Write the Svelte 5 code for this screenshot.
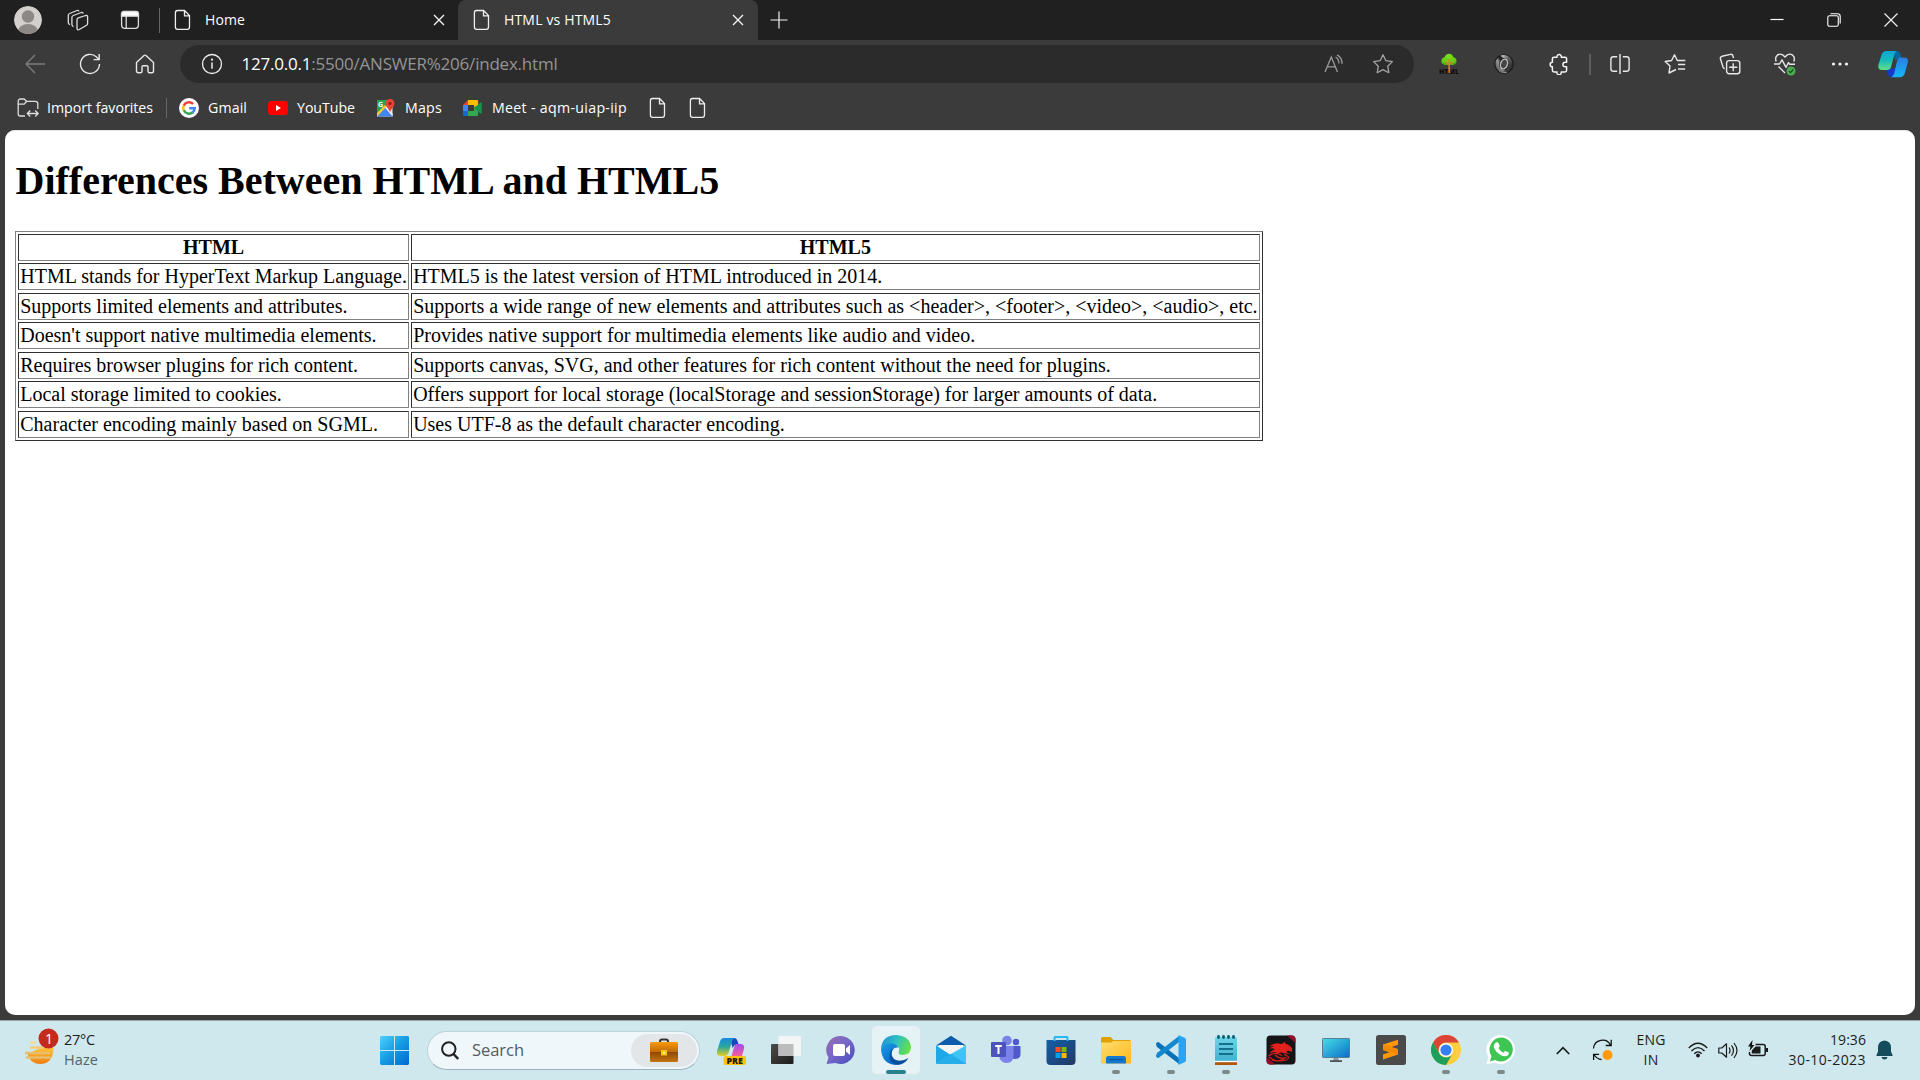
<script>
  const rows = [
    ['HTML stands for HyperText Markup Language.', 'HTML5 is the latest version of HTML introduced in 2014.'],
    ['Supports limited elements and attributes.', 'Supports a wide range of new elements and attributes such as <header>, <footer>, <video>, <audio>, etc.'],
    ["Doesn't support native multimedia elements.", 'Provides native support for multimedia elements like audio and video.'],
    ['Requires browser plugins for rich content.', 'Supports canvas, SVG, and other features for rich content without the need for plugins.'],
    ['Local storage limited to cookies.', 'Offers support for local storage (localStorage and sessionStorage) for larger amounts of data.'],
    ['Character encoding mainly based on SGML.', 'Uses UTF-8 as the default character encoding.'],
  ];
  const apps = ['copilot', 'taskview', 'chat', 'edge', 'mail', 'teams', 'store', 'folder', 'code', 'notepad', 'dragon', 'monitor', 'sublime', 'chrome', 'whatsapp'];
  const running = ['folder', 'code', 'notepad', 'chrome', 'whatsapp'];

  // Tracks a label out or in so that it fills the given width.
  function fit(node, width) {
    const natural = node.getBoundingClientRect().width;
    node.style.letterSpacing = `${(width - natural) / node.textContent.length}px`;
  }
</script>

{#snippet file()}
  <svg class="file" width="18" height="22" viewBox="0 0 18 22" fill="none" stroke="#eee" stroke-width="1.3"><path d="M3.5 1.5h7l5 5v11.5a2.3 2.3 0 0 1-2.3 2.3H3.7a2.3 2.3 0 0 1-2.3-2.3V3.8a2.3 2.3 0 0 1 2.1-2.3zM10.5 1.8v5h5" /></svg>
{/snippet}

{#snippet cross()}
  <svg width="12" height="12" viewBox="0 0 12 12" stroke="#f2f2f2" stroke-width="1.4"><path d="M1 1l10 10M11 1L1 11" /></svg>
{/snippet}

<div class="screen">
  <div class="tabs">
    <div class="c55">
      <svg width="28" height="28" viewBox="0 0 28 28"><clipPath id="av"><circle cx="14" cy="14" r="14" /></clipPath><g clip-path="url(#av)"><circle cx="14" cy="14" r="14" fill="#d2cfcc" /><circle cx="14" cy="10.5" r="6.2" fill="#8c8885" /><ellipse cx="14" cy="25.5" rx="10" ry="7.5" fill="#8c8885" /></g></svg>
    </div>
    <div class="c46">
      <svg width="22" height="22" viewBox="0 0 22 22" fill="none" stroke="#ddd" stroke-width="1.3" stroke-linejoin="round"><path d="M11.300 8.800l7.300-2.300q2-.5 2 1.500v6.500q0 1.200-1 1.800l-7.300 4.200q-2.200 1-2.300-1.200v-8.500q0-1.500 1.300-2z" /><path d="M6.500 17.500q-1.500-.3-1.600-2V8.500q0-1.500 1.400-2l8-3q1.600-.4 2 1M3 15.500q-1.700-.3-1.700-2V6.500q0-1.500 1.400-2l7.300-3q1.600-.5 2 .9" /></svg>
    </div>
    <div class="c58">
      <svg width="20" height="20" viewBox="0 0 20 20" fill="none" stroke="#ddd" stroke-width="1.3"><rect x="1.6" y="1.800" width="16.800" height="16.500" rx="3" /><path d="M1.500 6.200V4q0-2.500 2.500-2.500h12q2.500 0 2.500 2.500v2.200z" fill="#fff" /><path d="M6.200 6v12" /></svg>
    </div>
    <div class="tab first">
      {@render file()}
      <span class="tl" use:fit={40}>Home</span>
      {@render cross()}
    </div>
    <div class="tab active">
      {@render file()}
      <span class="tl" use:fit={107}>HTML vs HTML5</span>
      {@render cross()}
    </div>
    <div class="c42">
      <svg width="18" height="18" viewBox="0 0 18 18" stroke="#f2f2f2" stroke-width="1.200"><path d="M9 .5v17M.5 9h17" /></svg>
    </div>
    <div class="wins">
      <svg width="14" height="14" viewBox="0 0 14 14" stroke="#fff" stroke-width="1.200"><path d="M.5 6.500h13" /></svg>
      <svg width="14" height="14" viewBox="0 0 14 14" fill="none" stroke="#fff" stroke-width="1.100"><rect x=".8" y="2.800" width="10.500" height="10.500" rx="1.800" /><path d="M3.500.8h7a2.700 2.700 0 0 1 2.700 2.700v7" /></svg>
      <svg width="14" height="14" viewBox="0 0 14 14" stroke="#eee" stroke-width="1.200"><path d="M.5.5l13 13M13.500.5l-13 13" /></svg>
    </div>
  </div>

  <div class="tools">
    <div class="nav">
      <svg width="20" height="20" viewBox="0 0 20 20" fill="none" stroke="#7d7d7d" stroke-width="1.300"><path d="M20 10H1M10 1L1 10l9 9" /></svg>
      <svg width="22" height="22" viewBox="0 0 22 22" fill="none" stroke="#e8e8e8" stroke-width="1.400"><path d="M20.500 11a9.500 9.500 0 1 1-3-7l2.500 2.500M20.200 1v5.600h-5.600" /></svg>
      <svg width="20" height="20" viewBox="0 0 20 20" fill="none" stroke="#e8e8e8" stroke-width="1.400" stroke-linejoin="round"><path d="M1.500 8.500L9 1.500q1-.8 2 0l7.500 7V17q0 1.800-1.800 1.800h-2.200q-1.500 0-1.500-1.500V13q0-1.300-1.300-1.300H8.300Q7 11.700 7 13v4.300q0 1.500-1.500 1.500H3.300q-1.800 0-1.800-1.800z" /></svg>
    </div>
    <div class="address">
      <svg width="22" height="22" viewBox="0 0 22 22" fill="none" stroke="#eee" stroke-width="1.300"><circle cx="11" cy="11" r="9.500" /><path d="M11 9.500v6.200" stroke-width="1.500" /><circle cx="11" cy="6.700" r="1.100" fill="#eee" stroke="none" /></svg>
      <span class="url" use:fit={316}><b>127.0.0.1</b>:5500/ANSWER%206/index.html</span>
      <svg class="aloud" width="22" height="20" viewBox="0 0 22 20" fill="none" stroke="#9a9a9a" stroke-width="1.300"><path d="M2 18L8.300 3l6.200 15M4.200 12.800h8.300M12.500 3q3.500 2 3.500 6.500M14 .9q5.500 3 5 9" /></svg>
      <svg width="22" height="22" viewBox="0 0 22 22" fill="none" stroke="#a3a3a3" stroke-width="1.300" stroke-linejoin="round"><path d="M11 1.800l2.900 5.900 6.500.9-4.700 4.600 1.100 6.500-5.800-3.100-5.800 3.100 1.100-6.500-4.700-4.600 6.500-.9z" /></svg>
    </div>
    <div class="ext">
      <svg width="20" height="22" viewBox="0 0 20 22"><circle cx="5.800" cy="8" r="3.600" fill="#4fb010" /><circle cx="14" cy="8" r="3.600" fill="#4fb010" /><path d="M5 8h10v4H5z" fill="#4fb010" /><circle cx="10" cy="5.200" r="4.400" fill="#77dc18" /><circle cx="6" cy="7" r="2.800" fill="#69d015" /><circle cx="14" cy="7" r="2.800" fill="#69d015" /><path d="M10 6v12M6.500 9l3.500 3 3.500-3" fill="none" stroke="#c8842c" stroke-width="1.400" /><text x="0" y="20.500" font-size="6.500" font-weight="900" textLength="20" lengthAdjust="spacingAndGlyphs" fill="#120b08">HTML</text><path d="M9.700 14h1.400l.2 6H9.500z" fill="#d8761c" /></svg>
      <svg width="20" height="20" viewBox="0 0 20 20"><defs><linearGradient id="js" x1="0" y1="1" x2="1" y2="0"><stop stop-color="#3c3c3c" /><stop offset=".45" stop-color="#999" /><stop offset=".6" stop-color="#222" /><stop offset="1" stop-color="#3a3a3a" /></linearGradient><linearGradient id="js2" x1="0" y1="0" x2="1" y2="1"><stop stop-color="#ddd" /><stop offset=".4" stop-color="#666" /><stop offset="1" stop-color="#161616" /></linearGradient></defs><circle cx="10" cy="10" r="9.800" fill="#1c1c1c" /><path d="M11 16Q3 15 5.500 8 7 3.500 12 3 5-.5 1.800 7 .5 13 5 17.500 9 20 13.500 18.500z" fill="url(#js)" /><path d="M9 4q8 1 5.500 8Q13 16.500 8 17q7 3.500 10.200-4Q19.500 7 15 2.500 11 0 6.500 1.500z" fill="url(#js2)" /><ellipse cx="10" cy="10" rx="3.400" ry="5" transform="rotate(20 10 10)" fill="#454545" stroke="#b8b8b8" stroke-width="1.500" /></svg>
      <svg width="20" height="22" viewBox="0 0 20 22" fill="none" stroke="#f2f2f2" stroke-width="1.500" stroke-linejoin="round"><path d="M8 4.200a2.200 2.200 0 1 1 4.300 0h3.700q1.600 0 1.600 1.600v3.400h-1.400a2.300 2.300 0 0 0 0 4.600h1.400v3.500q0 1.600-1.600 1.600h-3.800a2.200 2.200 0 1 1-4.200 0H5q-1.600 0-1.600-1.600v-3.500a2.300 2.300 0 0 1 0-4.600V5.800Q3.400 4.200 5 4.200z" /></svg>
    </div>
    <div class="vline"></div>
    <div class="ext more">
      <svg width="20" height="20" viewBox="0 0 20 20" fill="none" stroke="#e8e8e8" stroke-width="1.400"><path d="M10 0v20M7.200 2.700H3.500Q.9 2.700.9 5.300v9.400q0 2.600 2.600 2.600h3.700M12.800 2.700h3.700q2.600 0 2.600 2.600v9.400q0 2.600-2.600 2.600h-3.700" /></svg>
      <svg width="22" height="22" viewBox="0 0 22 22" fill="none" stroke="#e8e8e8" stroke-width="1.400" stroke-linejoin="round"><path d="M12 16.500L5 20l1-7L1.200 8.500l6.400-1L10.500 1.800l2.800 5.700h8M14 11.500h7.200M14 16h7.200" /></svg>
      <svg width="22" height="22" viewBox="0 0 22 22" fill="none" stroke="#e8e8e8" stroke-width="1.400"><rect x="7.600" y="7.600" width="13.200" height="13.200" rx="2.500" /><path d="M14.200 10.200v8M10.200 14.200h8M14.500 5.200L14 3q-.6-2-2.500-1.600L3 3.300Q1 3.900 1.400 5.800L4 14q.6 1.600 1.800 1.600" /></svg>
      <svg width="22" height="24" viewBox="0 0 22 24" fill="none" stroke="#e8e8e8" stroke-width="1.400" stroke-linejoin="round"><path d="M2.200 9.500Q.6 5.500 3.300 3.200 7.500.4 11 5q3.500-4.600 7.700-1.800 2.700 2.300 1.100 6.300M0 12h5.500L8 7.800l4 7.500 2.500-4.800 1 1.700H21M4.500 14.500L11 21" /><circle cx="17" cy="19" r="4.500" fill="#4aad4f" stroke="none" /><path d="M15 19.200l1.500 1.500 2.800-3.200" stroke="#174d1b" stroke-width="1.200" /></svg>
      <svg width="18" height="6" viewBox="0 0 18 6" fill="#f2f2f2"><circle cx="2.500" cy="3" r="1.600" /><circle cx="9" cy="3" r="1.600" /><circle cx="15.500" cy="3" r="1.600" /></svg>
      <svg width="30" height="28" viewBox="0 0 30 28"><defs><linearGradient id="c1" x1="0" y1="0" x2="0" y2="1"><stop stop-color="#0aa5d8" /><stop offset=".5" stop-color="#19bcb8" /><stop offset="1" stop-color="#63e08a" /></linearGradient><linearGradient id="c2" x1="0" y1="0" x2="0" y2="1"><stop stop-color="#2a7de0" /><stop offset="1" stop-color="#15b8fa" /></linearGradient></defs><path d="M15 1h4q2.500 0 3.500 3l1 3.500q-4-.5-6 4z" fill="#0567a0" /><path d="M8 19l2 5.500q.8 2.500 4 2.500l3-1 2-8z" fill="#1739c9" /><path d="M8.500 1H19q-2 .8-3 5l-3 11q-1 3-4 3H4q-4.500 0-3.600-5L3.500 5Q4.800 1 8.500 1z" fill="url(#c1)" /><path d="M21 7.500h5.500q4.500.5 3.300 5l-2.800 10q-1 4.800-5.500 4.800H12.500q3-.5 4-5l2-9q1-4.800 2.500-5.800z" fill="url(#c2)" /></svg>
    </div>
  </div>

  <div class="marks">
    <div class="mk import">
      <svg width="22" height="20" viewBox="0 0 22 20" fill="none" stroke="#ddd" stroke-width="1.300" stroke-linejoin="round"><path d="M8 18H3.500Q1.200 18 1.200 15.700V3.500Q1.200 1 3.500 1h3.700L9.500 3.300h9q2.300 0 2.300 2.500V11M1.200 6.200h6L9.500 3.500M10.500 15.500H21M13.300 12.500l-3 3 3 3M18.200 12.500l3 3-3 3" /></svg>
      <span use:fit={106}>Import favorites</span>
    </div>
    <div class="sep"></div>
    <div class="mk gmail">
      <svg width="20" height="20" viewBox="0 0 20 20" fill="none" stroke-width="2.500"><circle cx="10" cy="10" r="10" fill="#fff" stroke="none" /><path d="M14.100 6A5.700 5.700 0 0 0 4.800 7.700" stroke="#ea4335" /><path d="M4.800 7.500a5.700 5.700 0 0 0 0 5" stroke="#fbbc05" /><path d="M4.800 12.300a5.700 5.700 0 0 0 9 2" stroke="#34a853" /><path d="M13.600 14.500a5.700 5.700 0 0 0 2.100-4.300H10.200" stroke="#4285f4" /></svg>
      <span use:fit={39}>Gmail</span>
    </div>
    <div class="mk yt">
      <svg width="20" height="14" viewBox="0 0 20 14"><rect width="20" height="14" rx="3.200" fill="#f00" /><path d="M8 4v6l5-3z" fill="#fff" /></svg>
      <span use:fit={58}>YouTube</span>
    </div>
    <div class="mk maps">
      <svg width="19" height="18" viewBox="0 0 19 18"><path d="M1 1h15.500v16.500H1z" fill="#e8e8e8" /><path d="M1 1h11l-1 6-10 9z" fill="#2ba24c" /><path d="M1 17.500l8-9 8 9z" fill="#4285f4" /><path d="M1 14l8-8 1.500 1.500L1 17.500z" fill="#fbcb2e" /><path d="M9 8.500l1.500-1 6 7v3z" fill="#eee" /><text x="2" y="8" font-size="7" font-weight="700" fill="#fff">G</text><path d="M14 0a4.500 4.500 0 0 1 4.500 4.500Q18.500 7 16 9.500q-1.500 2-2 3.500-.5-1.500-2-3.500-2.500-2.500-2.500-5A4.500 4.500 0 0 1 14 0z" fill="#ea4335" /><circle cx="14" cy="4.500" r="1.600" fill="#8d1d16" /></svg>
      <span use:fit={37}>Maps</span>
    </div>
    <div class="mk meet">
      <svg width="19" height="16" viewBox="0 0 19 16"><path d="M0 5L5 0v5z" fill="#ea4335" /><path d="M0 5h5v6H0z" fill="#4285f4" /><path d="M0 11h5v5H1.500Q0 16 0 14.500z" fill="#1967d2" /><path d="M5 0h9q1.200 0 1.200 1.200V6L11 9V5H5z" fill="#fbbc04" /><path d="M5 11h6V7l4.200-1v8.500q0 1.500-1.200 1.500H5z" fill="#34a853" /><path d="M11 8l6.500-5.500q1.200-.5 1.200.7v9.600q0 1.200-1.200.7z" fill="#189447" /></svg>
      <span use:fit={135}>Meet - aqm-uiap-iip</span>
    </div>
    {@render file()}
    <div class="gapfile">{@render file()}</div>
  </div>

  <main class="page">
    <h1>Differences Between HTML and HTML5</h1>
    <div class="table">
      <div class="cell th">HTML</div>
      <div class="cell th">HTML5</div>
      {#each rows as [a, b]}
        <div class="cell">{a}</div>
        <div class="cell">{b}</div>
      {/each}
    </div>
  </main>

  <div class="taskbar">
    <div class="weather">
      <svg width="36" height="38" viewBox="0 0 36 38"><defs><linearGradient id="sun" x1="0" y1="0" x2="0" y2="1"><stop stop-color="#fcc536" /><stop offset="1" stop-color="#f07d13" /></linearGradient></defs><path d="M4 26l12-6h13.500Q29 36 16 36 8 36 4 28z" fill="url(#sun)" /><g stroke-width="2.500" stroke-linecap="round"><path d="M7 14.500h4" stroke="#f3dc93" /><path d="M7 19.500h12" stroke="#f1cd78" /><path d="M2 25h23M3 29.500h23" stroke="#e8bd6b" /></g><circle cx="24.500" cy="10.500" r="10" fill="#c42b1c" /><text x="25" y="15.500" text-anchor="middle" font-size="14" fill="#fff">1</text></svg>
      <div class="wt"><span use:fit={31}>27°C</span><br /><span class="haze" use:fit={34}>Haze</span></div>
    </div>

    <svg class="start" width="29" height="29" viewBox="0 0 29 29"><defs><linearGradient id="wn" gradientUnits="userSpaceOnUse" x1="0" y1="0" x2="29" y2="29"><stop stop-color="#4cd0fb" /><stop offset=".5" stop-color="#159be4" /><stop offset="1" stop-color="#0067cf" /></linearGradient></defs><path fill="url(#wn)" d="M1 0h13v14H0V1zM15 0h13l1 1v13H15zM0 15h14v14H1l-1-1zM15 15h14v13l-1 1H15z" /></svg>

    <div class="search">
      <svg width="18" height="19" viewBox="0 0 18 19" fill="none" stroke="#222" stroke-width="2"><circle cx="7.800" cy="8" r="6.700" /><path d="M12.500 13l4.700 5" stroke-width="2.500" /></svg>
      <span use:fit={52}>Search</span>
      <div class="case">
        <svg width="28" height="24" viewBox="0 0 28 24"><defs><linearGradient id="bc" x1="0" y1="0" x2="0" y2="1"><stop stop-color="#f79a0b" /><stop offset=".5" stop-color="#bf6a07" /><stop offset=".52" stop-color="#8f4a04" /><stop offset="1" stop-color="#c47510" /></linearGradient></defs><path d="M10 5V3.500Q10 1.500 12 1.500h4q2 0 2 2V5" fill="none" stroke="#333" stroke-width="2" /><rect y="4" width="28" height="20" rx="1.500" fill="url(#bc)" /><rect x="11" y="12" width="6" height="5.500" fill="#f6c900" /><rect x="13" y="14" width="2" height="2" fill="#fff3a0" /></svg>
      </div>
    </div>

    <div class="apps">
      {#each apps as app}
        <div class="app" class:on={app === 'edge'} class:run={running.includes(app)}>
          <svg width="30" height="30" viewBox="0 0 30 30">
            {#if app === 'copilot'}
              <defs><linearGradient id="p1" x1="0" y1="0" x2="0" y2="1"><stop stop-color="#1589e0" /><stop offset=".5" stop-color="#2fa89d" /><stop offset="1" stop-color="#e8cf22" /></linearGradient><linearGradient id="p2" x1="0" y1="0" x2="0" y2="1"><stop stop-color="#a44cf0" /><stop offset=".6" stop-color="#ee5e9c" /><stop offset="1" stop-color="#fb9d57" /></linearGradient></defs>
              <g transform="translate(1 0)"><path d="M13 3h4q2.500 0 3.500 3l1 3q-4 0-6 4z" fill="#1a47bd" /><path d="M7 3h11q-2.500.8-3.500 5l-3 10q-1 3-4 3H4q-5 0-4-5L3 6.500Q4 3 7 3z" fill="url(#p1)" /><path d="M19 9h5q4 .5 3 5l-3 10q-1 4-5 4H10q3-1 4-5l2.500-9q1-4 2.500-5z" fill="url(#p2)" /></g><rect x="7.500" y="21" width="22.500" height="9" rx="2" fill="#ffc20e" /><text x="10.500" y="28.500" font-size="8" font-weight="800" textLength="16.500" lengthAdjust="spacingAndGlyphs" fill="#231a00">PRE</text>
            {:else if app === 'taskview'}
              <defs><linearGradient id="tv" x1="0" y1="0" x2="1" y2="1"><stop stop-color="#4b4b49" /><stop offset="1" stop-color="#1d1d1c" /></linearGradient></defs><rect x="0" y="9" width="22.500" height="20" rx="1" fill="url(#tv)" /><path d="M7.500 1H30v20H7.500z" fill="#f3f4f4" /><path d="M7.500 9h15v12h-15z" fill="#bcbcbc" />
            {:else if app === 'chat'}
              <defs><linearGradient id="ch" x1="0" y1="0" x2="1" y2="1"><stop stop-color="#9a69b0" /><stop offset=".45" stop-color="#7868c8" /><stop offset="1" stop-color="#454bbd" /></linearGradient></defs><path d="M15 1a14 14 0 1 1-5.500 27L.5 29l2-6.500A14 14 0 0 1 15 1z" fill="url(#ch)" /><rect x="7" y="9" width="12" height="12" rx="2" fill="#fff" /><path d="M20 13.500L24 10v10l-4-3.500z" fill="#fff" />
            {:else if app === 'edge'}
              <defs><linearGradient id="e1" x1="0" y1=".2" x2="1" y2=".5"><stop stop-color="#1b8fd8" /><stop offset=".5" stop-color="#2fc2c2" /><stop offset="1" stop-color="#67e045" /></linearGradient><linearGradient id="e2" x1="0" y1="0" x2=".6" y2="1"><stop stop-color="#1d9de3" /><stop offset="1" stop-color="#0567cb" /></linearGradient></defs>
              <path d="M0 14Q1 0 15.500 0 29 1 30 12q0 7.500-8 8-6 0-4-4 1.500-5-5-6Q4 9 0 14z" fill="url(#e1)" /><path d="M0 14q4-7 12-5.500 4 1 5.500 4-7-1-7 6.500 0 7 6 11Q1 30 0 14z" fill="url(#e2)" /><path d="M13 13q-5 6 0 11 6 4 14.500-1Q24 29 17 30 8 28 8.500 20q.5-5 4.500-7z" fill="#0a4f9e" />
            {:else if app === 'mail'}
              <path d="M0 10.500L15 .8l15 9.700z" fill="#0b5cab" /><path d="M3 10h24v10H3z" fill="#f4f4f4" /><path d="M0 10.500L18 22l12 6.500H0z" fill="#1ea8e6" /><path d="M30 10.500V29H0L15 19z" fill="#3bc5f2" /><path d="M15 19l15 10H0z" fill="#25aee9" />
            {:else if app === 'teams'}
              <circle cx="16" cy="5.500" r="4.800" fill="#7b83eb" /><circle cx="25" cy="7" r="3.200" fill="#5059c9" /><path d="M20 11h8.500q1 0 1 1v7q0 5-6 5-3 0-3.500-2z" fill="#5059c9" /><path d="M8 11h14.500v10q0 6.500-7 7Q9 27.500 8 21z" fill="#7b83eb" /><rect x="0" y="7" width="15" height="15" rx="1" fill="#4b53bc" /><path d="M4.200 11h6.600M7.500 11v8" stroke="#fff" stroke-width="2" />
            {:else if app === 'store'}
              <defs><linearGradient id="st" x1="0" y1="0" x2="1" y2="1"><stop stop-color="#1260a8" /><stop offset="1" stop-color="#243762" /></linearGradient></defs><path d="M.5 5h29v21q0 4-4 4h-21q-4 0-4-4z" fill="url(#st)" /><path d="M8.500 6V2.800q0-.8.800-.8h11.400q.8 0 .8.800V6" fill="none" stroke="#28b8f3" stroke-width="2" /><path d="M9.500 12h5v5h-5z" fill="#f25022" /><path d="M15.500 12h5v5h-5z" fill="#7fba00" /><path d="M9.500 18h5v5h-5z" fill="#00a4ef" /><path d="M15.500 18h5v5h-5z" fill="#ffb900" />
            {:else if app === 'folder'}
              <defs><linearGradient id="fo" x1="0" y1="0" x2="1" y2="1"><stop stop-color="#ffdc72" /><stop offset="1" stop-color="#fcbb17" /></linearGradient></defs><path d="M0 3.500Q0 2 1.500 2h8l3 3H29l1 1v5H0z" fill="#e2a100" /><path d="M0 7.500h10L12.500 6H30v21.500Q30 28.500 29 28.500H1q-1 0-1-1z" fill="url(#fo)" /><path d="M5 28.500v-5Q5 21 7.500 21h15q2.500 0 2.500 2.500v5z" fill="#1478cf" /><path d="M8.500 24.700h13" stroke="#0a4a91" stroke-width="1" />
            {:else if app === 'code'}
              <path d="M0 9.500Q0 7 2.500 7L23 23v6L1 12z" fill="#0872b9" /><path d="M0 20.500Q0 23 2.500 23L23 7V1L1 18z" fill="#1488cf" /><path d="M22.500 0L29 3q1 .6 1 2v20q0 1.400-1 2l-6.500 3z" fill="#29a3f2" />
            {:else if app === 'notepad'}
              <defs><linearGradient id="np" x1="0" y1="0" x2="0" y2="1"><stop stop-color="#70d3e5" /><stop offset="1" stop-color="#41b0cf" /></linearGradient></defs><path d="M4 26h22v4H4z" fill="#ad560c" /><rect x="4" y="2" width="22" height="25" rx="1.500" fill="url(#np)" /><path d="M4 26.500h22" stroke="#fff" stroke-width="1.400" /><path d="M8 9h14M8 14h14M8 19h14" stroke="#146f8d" stroke-width="1.800" /><path d="M7.500 1.400v1.200M12.500 1.400v1.200M17.500 1.400v1.200M22.500 1.400v1.200" stroke="#095f77" stroke-width="2.800" stroke-linecap="round" />
            {:else if app === 'dragon'}
              <rect x=".5" y=".5" width="29" height="29" rx="4" fill="#151517" /><path d="M21 .5h4.500q4 0 4 4V8zM.5 22v3.500q0 4 4 4H9z" fill="#970d29" /><path d="M4 11Q9 7 15 9q3-1 4-2.500L19.500 9q3 0 6.500 4v4l-4-1.500-2 1.500 4 2-5-.5q-4-2-7 0-4-3-8 0 1-3 5-4-3-2-5.500-.5 1-2.200 4-2-1.500-1.500-3.500-.5z" fill="#e3201b" /><path d="M2.500 21Q9 16 16 20.500M3 22q7 6 17 3 6-3-2-5.500M6 25q8 3 14-3M9 20q4 4 10 3" fill="none" stroke="#d31d1b" stroke-width="1.200" />
            {:else if app === 'monitor'}
              <defs><linearGradient id="mo" x1="0" y1="0" x2="1" y2="1"><stop stop-color="#45e0e6" /><stop offset="1" stop-color="#0c6cc8" /></linearGradient></defs><path d="M12.500 22h5v4h-5z" fill="#8b979d" /><path d="M9 25.200h12v1.800H9z" fill="#49565e" /><rect x="1.500" y="3.500" width="27" height="19" rx=".8" fill="url(#mo)" stroke="#577f91" />
            {:else if app === 'sublime'}
              <rect width="30" height="30" rx="2.500" fill="#4a4a4a" /><path d="M7 9.500l15-4.700v5L15.500 12l6.500 2v5.500l-15 5v-5l6.500-2.200L7 15z" fill="#ff9800" /><path d="M7 15v-5.500l15 4.700v5.300z" fill="#f08b00" />
            {:else if app === 'chrome'}
              <circle cx="15" cy="15" r="15" fill="#ffcd40" /><path d="M2 7.500a15 15 0 0 1 26 0H15A7.500 7.500 0 0 0 8.500 18.700z" fill="#dc4437" /><path d="M2 7.500A15 15 0 0 0 15 30l6.500-11.300A7.500 7.500 0 0 1 8.500 18.700z" fill="#1da05b" /><circle cx="15" cy="15" r="7" fill="#fff" /><circle cx="15" cy="15" r="5.600" fill="#347ff3" />
            {:else}
              <path d="M15 0A14.500 14.500 0 1 1 8 27.500L.5 29.500l2-7.500A14.500 14.500 0 0 1 15 0z" fill="#fff" /><path d="M15 2.500A12 12 0 1 1 9 25l-5 1.500L5.500 21A12 12 0 0 1 15 2.500z" fill="#3ec653" /><path d="M10 7.500q1.500-1 2.500.8l1.200 2.500q.2 1-1.300 2.300 2 3.500 5 4.700 1.200-2 2.200-1.700l3 1.500q.7.800-.3 2.200-2.500 3-7.800.2-4.500-2.500-6.500-7Q7 9 10 7.500z" fill="#fff" />
            {/if}
          </svg>
        </div>
      {/each}
    </div>

    <div class="tray">
      <svg width="14" height="9" viewBox="0 0 14 9" fill="none" stroke="#1a1a1a" stroke-width="1.700"><path d="M.8 8L7 1.700 13.200 8" /></svg>
      <svg class="sync" width="21" height="22" viewBox="0 0 21 22" fill="none" stroke="#111" stroke-width="1.300"><path d="M1.500 9.500a9 9 0 0 1 17-3.300M19.200.8v5.700h-5.500M1.600 21v-5.700h5.500M2 15.500q3 4.800 7.500 5" /><circle cx="15.500" cy="16" r="5" fill="#ff9a00" stroke="none" /></svg>
      <div class="lang"><span use:fit={29}>ENG</span><br /><span use:fit={15}>IN</span></div>
      <svg class="wifi" width="20" height="16" viewBox="0 0 20 16" fill="none" stroke="#1a1a1a" stroke-width="1.400"><path d="M.8 6Q10-3.500 19.200 6M3.500 9q6.500-6.800 13 0M6.300 11.800q3.700-3.800 7.400 0" /><circle cx="10" cy="13.500" r="1.900" fill="#1a1a1a" stroke="none" /></svg>
      <svg class="vol" width="20" height="17" viewBox="0 0 20 17" fill="none" stroke="#1a1a1a" stroke-width="1.200" stroke-linejoin="round"><path d="M.8 6h3L8.500 1.800v13.400L3.800 11h-3zM11 5.500q2.200 3 0 6M13.500 3.300q4 5.200 0 10.400M16 1q6 7.500 0 15" /></svg>
      <svg class="bat" width="20" height="17" viewBox="0 0 20 17"><path d="M7.500 4.500h7.700q2 0 2 2v7q0 2-2 2H3.500q-2 0-2-2V12" fill="none" stroke="#1a1a1a" stroke-width="1.500" /><path d="M18 8h2v4h-2zM7.500 6.500h5v7H3.800v-3z" fill="#1a1a1a" /><path d="M4.500 0L0 6.500h2.500L1.500 11 6.500 5H4z" fill="#111" /></svg>
      <div class="clock"><span use:fit={36}>19:36</span><br /><span use:fit={77.5}>30-10-2023</span></div>
      <svg class="bell" width="17" height="20" viewBox="0 0 17 20" fill="#154c5c"><path d="M8.500.5q6.300.5 6.500 7v4l1.500 3.500v1H.5v-1L2 11.500v-4q.2-6.500 6.500-7zM5.500 17h6q-.5 2.500-3 2.500t-3-2.500z" /></svg>
    </div>
  </div>
</div>

<style>
  :global(body) { margin: 0; overflow: hidden; }
  .screen { width: 1920px; height: 1080px; display: flex; flex-direction: column; background: #3b3b3b; font-family: 'Open Sans', sans-serif; font-size: 15px; color: #fff; overflow: hidden; }
  svg { display: block; flex: none; }
  span { white-space: nowrap; }

  .tabs { height: 40px; display: flex; align-items: center; background: #202020; box-sizing: border-box; }
  .tabs > div { display: flex; align-items: center; }
  .c55 { width: 53px; padding-left: 14px; box-sizing: border-box; }
  .c46 { width: 49px; justify-content: center; }
  .c58 { width: 58px; padding-left: 18px; box-sizing: border-box; border-right: 1px solid #666; height: 25px; }
  .tab { height: 40px; box-sizing: border-box; }
  .tab.first { width: 298px; padding: 0 13px 0 14px; }
  .tab.active { width: 300px; padding: 0 14px 0 15px; background: #3b3b3b; border-radius: 8px 8px 0 0; }
  .tl { margin-left: 13px; margin-right: auto; font-size: 14px; line-height: 20px; margin-top: -1px; }
  .c42 { width: 42px; justify-content: center; }
  .tabs .wins { margin-left: auto; gap: 43px; padding-right: 22px; }

  .tools { height: 48px; display: flex; align-items: center; }
  .nav { width: 180px; display: flex; align-items: center; padding-left: 25px; gap: 34px; box-sizing: border-box; flex: none; }
  .address { width: 1234px; height: 38px; border-radius: 19px; background: #2b2b2b; display: flex; align-items: center; box-sizing: border-box; padding: 0 20px 0 21px; flex: none; }
  .url { font-size: 17px; color: #949494; margin-left: 18.500px; margin-right: auto; line-height: 24px; margin-top: -1px; }
  .url b { font-weight: 400; color: #fff; }
  .aloud { margin-right: 27px; }
  .ext { width: 165px; margin-left: 7.500px; display: grid; grid-template-columns: repeat(3, 55px); place-items: center; flex: none; }
  .ext.more { width: 326px; margin-left: 1.500px; grid-template-columns: repeat(5, 55px) 51px; }
  .vline { width: 2px; height: 21px; background: #5e5e5e; margin-left: 2px; }

  .marks { height: 42px; display: flex; align-items: center; padding: 0 0 2px 17px; box-sizing: border-box; }
  .mk { display: flex; align-items: center; font-size: 14.200px; gap: 9px; line-height: 20px; }
  .mk span { margin-top: -1px; }
  .import { width: 149px; gap: 8px; }
  .sep { width: 1px; height: 20px; background: #666; }
  .gmail { width: 89px; padding-left: 12px; }
  .yt { width: 108px; }
  .maps { width: 87px; gap: 10px; }
  .meet { width: 186px; gap: 10px; }
  .gapfile { margin-left: 22px; }

  .page { height: 885px; margin: 0 5px; border-radius: 10px; background: #fff; color: #000; box-sizing: border-box; padding: 28px 10px 0; font-family: 'Liberation Serif', serif; font-size: 20px; box-shadow: inset 0 1px #e3e3e3; }
  h1 { margin: 0 0 0 .5px; font-size: 40px; line-height: 46px; font-weight: 700; height: 73px; }
  .table { display: grid; width: max-content; grid-template-columns: max-content max-content; gap: 2.500px 2px; padding: 1.750px 2px; border: 1px solid; border-color: #808080 #303030 #303030 #808080; }
  .cell { border: 1px solid; border-color: #303030 #808080 #808080 #303030; padding: 1px 1px 1px 1.250px; height: 23px; line-height: 22.500px; }
  .th { text-align: center; font-weight: 700; }

  .taskbar { height: 60px; margin-top: 5px; display: flex; align-items: center; background: #cfe8ee; color: #1d1d1d; box-shadow: inset 0 1px #9aa5a9; box-sizing: border-box; }
  .weather { width: 380px; display: flex; align-items: center; padding-left: 24px; box-sizing: border-box; }
  .weather svg { margin-top: -7px; }
  .wt { font-size: 14.500px; line-height: 20px; margin-left: 4px; margin-top: -1px; }
  .haze { color: #566266; }
  .start { margin-right: 18px; }
  .search { width: 273px; height: 39px; border-radius: 20px; box-sizing: border-box; border: 1px solid #bdd3d9; border-bottom-color: #9db4bc; background: #eff7fa; display: flex; align-items: center; padding: 0 2px 0 13px; color: #575b5d; font-size: 16.500px; }
  .search span { margin-left: 13px; line-height: 22px; }
  .case { width: 66px; height: 33px; border-radius: 17px; background: #e2e6e8; margin-left: auto; display: flex; align-items: center; justify-content: center; }
  .apps { display: flex; margin-left: 3px; }
  .app { width: 48px; height: 48px; margin: 0 3.500px; display: flex; align-items: center; justify-content: center; position: relative; border-radius: 5px; }
  .app.on { background: #e5f2f6; box-shadow: 0 0 1px 1px #d7e6ea; }
  .app.run::after, .app.on::after { content: ''; position: absolute; bottom: 0; height: 4px; width: 8px; border-radius: 2px; background: #7d888b; }
  .app.on::after { width: 20px; background: #26828f; }
  .tray { flex: 1; display: flex; align-items: center; padding-left: 28px; }
  .sync { margin-left: 22px; }
  .lang { width: 54px; text-align: center; font-size: 14px; line-height: 20px; margin-left: 11px; }
  .wifi { margin-left: 10px; }
  .vol { margin-left: 10px; }
  .bat { margin-left: 10px; margin-top: -3px; }
  .clock { width: 98px; text-align: right; font-size: 14px; line-height: 20px; margin-top: -1px; }
  .bell { margin-left: 10px; }
</style>
